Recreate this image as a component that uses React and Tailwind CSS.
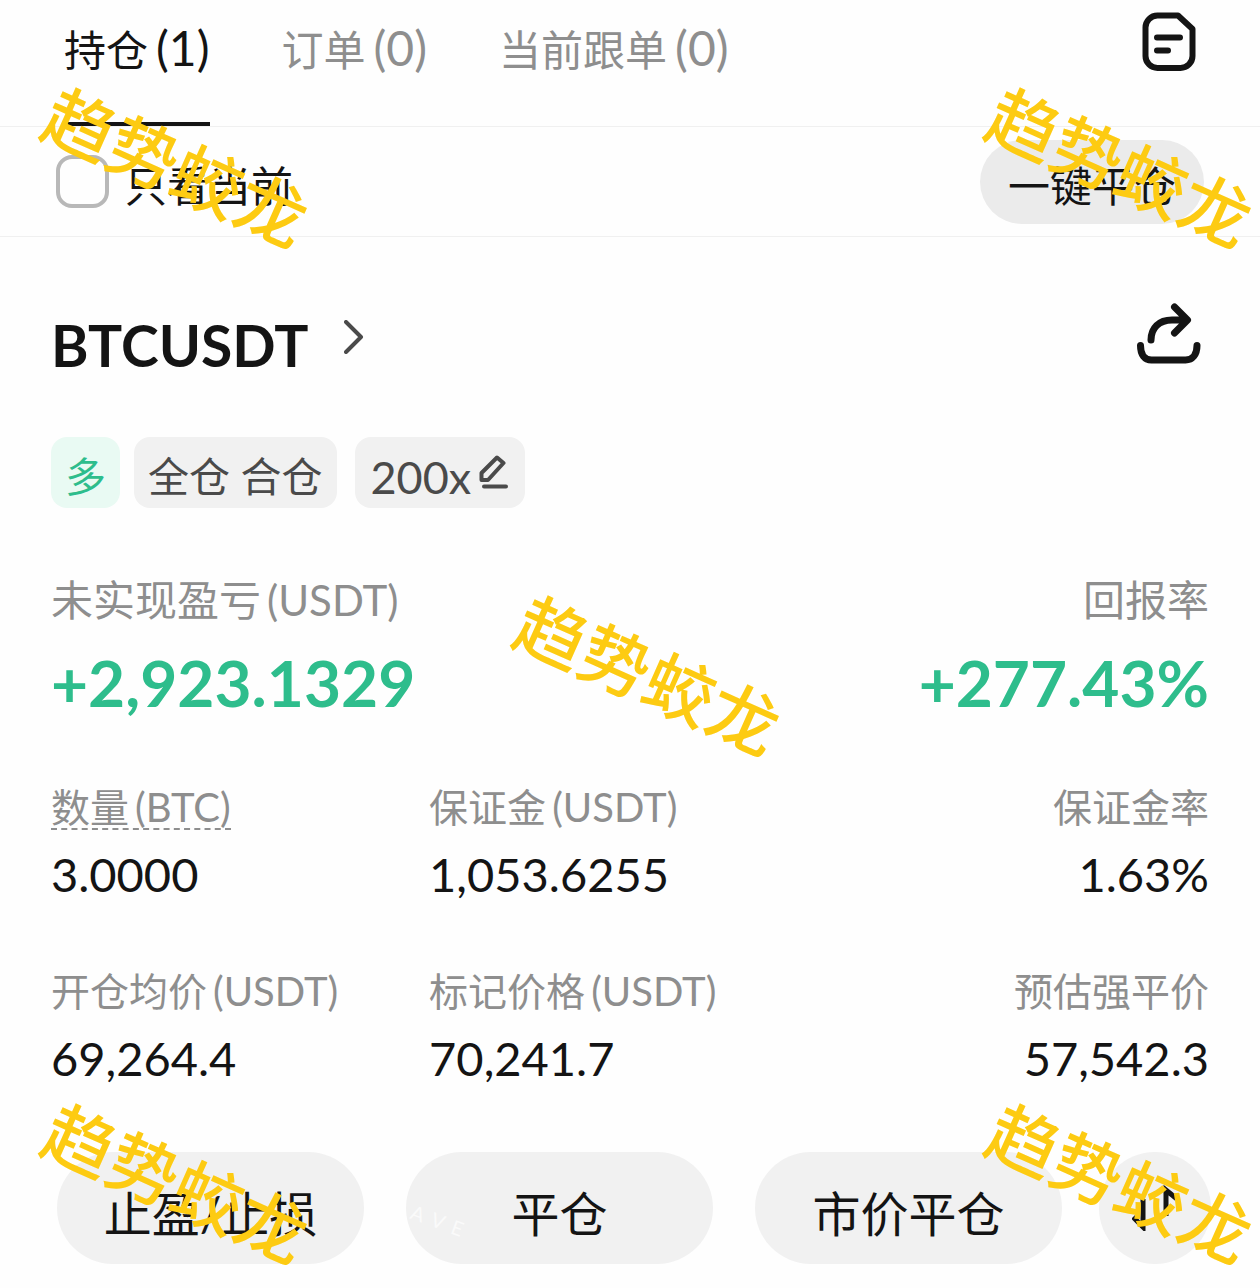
const TABS = [
    { id: "positions", label: "持仓", count: 1 },
    { id: "orders", label: "订单", count: 0 },
    { id: "copy", label: "当前跟单", count: 0 },
];

const STATS = [
    { label: "数量", unit: "(BTC)", value: "3.0000", hint: true },
    { label: "保证金", unit: "(USDT)", value: "1,053.6255" },
    { label: "保证金率", value: "1.63%" },
    { label: "开仓均价", unit: "(USDT)", value: "69,264.4" },
    { label: "标记价格", unit: "(USDT)", value: "70,241.7" },
    { label: "预估强平价", value: "57,542.3" },
];

const ACTIONS = ["止盈/止损", "平仓", "市价平仓"];

const WATERMARKS = [
    "left-[36px] top-[132px]",
    "left-[980px] top-[132px]",
    "left-[508px] top-[640px]",
    "left-[36px] top-[1148px]",
    "left-[980px] top-[1148px]",
];

const OrdersIcon = () => (
    <svg width="54" height="60" viewBox="0 0 54 60" fill="none" stroke="currentColor" strokeWidth="6"
         strokeLinecap="round" strokeLinejoin="round">
        <path d="M15.500 3.500H36L50.500 17V44a12 12 0 0 1-12 12H15.500a12 12 0 0 1-12-12V15.500a12 12 0 0 1 12-12Z"/>
        <path d="M15 25.500H38M15 38.500H26"/>
    </svg>
);

const ShareIcon = () => (
    <svg width="64" height="62" viewBox="0 0 64 62" fill="none" stroke="currentColor" strokeWidth="7"
         strokeLinecap="round" strokeLinejoin="round">
        <path d="M3.500 42.500c0 9 4 14.500 11 14.500h34c7 0 11.500-5.500 11.500-14.500"/>
        <path d="M14 37C14 25 22 17 35 17H50M37.500 4 50.500 17 37.500 30"/>
    </svg>
);

const EditIcon = () => (
    <svg width="30" height="34" viewBox="0 0 30 34" fill="none" stroke="currentColor" strokeWidth="4"
         strokeLinecap="round" strokeLinejoin="round">
        <path d="M2.500 25V18L18 2.500 24.500 8 9 25Z"/>
        <path d="M5 31.500H27"/>
    </svg>
);

const SwapIcon = () => (
    <svg width="46" height="46" viewBox="0 0 46 46" fill="none" stroke="currentColor" strokeWidth="5">
        <path d="M11 14V42L1 32M34 31V5L45 14"/>
    </svg>
);

function Stat({ label, unit, value, hint, right }) {
    return (
        <div className={right ? "flex flex-col items-end" : "flex flex-col items-start"}>
            <dt className={hint
                ? "h-[46px] text-[39px] leading-[46px] text-[#8e8e8e] border-b-2 border-dashed border-[#8e8e8e]"
                : "h-[46px] text-[39px] leading-[46px] text-[#8e8e8e]"}>
                {label}
                {unit && <span className="ml-1.5 text-[40px]">{unit}</span>}
            </dt>
            <dd className="mt-4 text-[47px] leading-[56px]">{value}</dd>
        </div>
    );
}

function App() {
    return (
        <main className="relative overflow-hidden bg-[#fefefe] pb-6 text-[#141414] font-['Lato','Noto_Sans_CJK_SC',sans-serif]">
            <header className="flex items-start justify-between border-b border-[#f0f0f0] pl-16 pr-16">
                <nav className="flex gap-[72px]">
                    {TABS.map((tab, i) => (
                        <button
                            key={tab.id}
                            className={i === 0
                                ? "h-[126px] pb-7 text-[42px] leading-[96px] border-b-4 border-[#141414]"
                                : "h-[126px] pb-7 text-[42px] leading-[96px] text-[#8e8e8e] border-b-4 border-transparent"}
                        >
                            {tab.label}<span className="ml-2 text-[48px]">({tab.count})</span>
                        </button>
                    ))}
                </nav>
                <button aria-label="订单" className="mt-3"><OrdersIcon/></button>
            </header>

            <div className="flex h-[110px] items-center justify-between border-b border-[#f0f0f0] pl-14 pr-14">
                <label className="flex items-center gap-4 text-[42px] leading-[56px]">
                    <input type="checkbox" className="size-[53px] appearance-none rounded-2xl border-4 border-[#b8b8b8]"/>
                    <span className="pt-2">只看当前</span>
                </label>
                <button className="h-[84px] rounded-full bg-[#ebebeb] px-7 pt-2 text-[42px] leading-[56px]">一键平仓</button>
            </div>

            <section className="pl-[51px] pr-[51px]">
                <div className="mt-16 flex items-start justify-between">
                    <a href="#btcusdt" className="flex items-center gap-9">
                        <h2 className="text-[57px] leading-[88px] font-bold">BTCUSDT</h2>
                        <svg width="20" height="34" viewBox="0 0 20 34" fill="none" stroke="#4a4a4a" strokeWidth="4"
                             strokeLinecap="round" strokeLinejoin="round" className="mb-4">
                            <path d="M2 2 17 17 2 32"/>
                        </svg>
                    </a>
                    <button aria-label="分享" className="mt-0.5 mr-2"><ShareIcon/></button>
                </div>

                <div className="mt-12 flex h-[71px] text-[41px] leading-[71px] text-[#4a4a4a]">
                    <span className="rounded-2xl bg-[#e9faf3] px-[14px] pt-1 text-[#2ebd8c]">多</span>
                    <span className="ml-[14px] rounded-2xl bg-[#f1f1f1] px-[14px] pt-1">全仓 合仓</span>
                    <button className="ml-[18px] flex items-start gap-2 rounded-2xl bg-[#f1f1f1] px-4 pt-[18px] text-[45px] leading-[44px]">
                        200x
                        <EditIcon/>
                    </button>
                </div>

                <dl className="mt-16 flex justify-between">
                    <div>
                        <dt className="text-[42px] leading-[56px] text-[#8e8e8e]">
                            未实现盈亏<span className="ml-1.5">(USDT)</span>
                        </dt>
                        <dd className="mt-3 text-[64px] leading-[86px] font-bold text-[#2ebd8c]">+2,923.1329</dd>
                    </div>
                    <div className="text-right">
                        <dt className="text-[42px] leading-[56px] text-[#8e8e8e]">回报率</dt>
                        <dd className="mt-3 text-[64px] leading-[86px] font-bold text-[#2ebd8c]">+277.43%</dd>
                    </div>
                </dl>

                <dl className="mt-[58px] grid grid-cols-[32fr_33fr_33fr] gap-y-[66px]">
                    {STATS.map((stat, i) => (
                        <Stat key={stat.label} {...stat} right={i % 3 === 2}/>
                    ))}
                </dl>
            </section>

            <footer className="mt-[66px] flex gap-[37px] pl-[57px] pr-[49px]">
                <div className="flex grow gap-[42px]">
                    {ACTIONS.map((action) => (
                        <button key={action} className="h-28 flex-1 rounded-full bg-[#f1f1f1] pt-3 text-[48px] leading-[64px]">
                            {action}
                        </button>
                    ))}
                </div>
                <button aria-label="反手" className="flex size-28 items-center justify-center rounded-full bg-[#f1f1f1]">
                    <SwapIcon/>
                </button>
            </footer>

            {WATERMARKS.map((position) => (
                <span
                    key={position}
                    aria-hidden="true"
                    className={`pointer-events-none absolute rotate-[24deg] whitespace-nowrap text-[70px] leading-[70px] font-medium text-[#fdcb12] ${position}`}
                >
                    趋势蛟龙
                </span>
            ))}
            <span aria-hidden="true" className="pointer-events-none absolute left-[410px] top-[1208px] flex rotate-[20deg] gap-2 text-[20px] leading-6 text-[#fafafa]">
                <span>A</span><span>V</span><span>E</span>
            </span>
        </main>
    );
}

export default App;
